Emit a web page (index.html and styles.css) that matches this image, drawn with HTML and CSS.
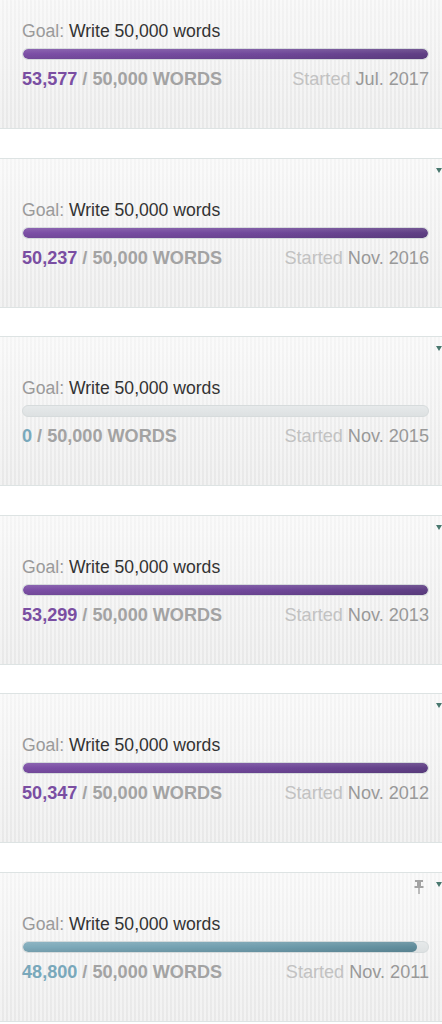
FILE: index.html
```html
<!DOCTYPE html>
<html>
<head>
<meta charset="utf-8">
<link rel="stylesheet" href="styles.css">
</head>
<body>
<div class="list">
  <div class="card">
    <span class="caret"></span>
    <div class="goal"><span class="label">Goal:</span> Write 50,000 words</div>
    <div class="track"><div class="fill purple" style="width:100%"></div></div>
    <div class="meta">
      <div class="count"><span class="num purple-t">53,577</span> / 50,000 WORDS</div>
      <div class="started">Started <span class="date">Jul. 2017</span></div>
    </div>
  </div>
  <div class="card">
    <span class="caret"></span>
    <div class="goal"><span class="label">Goal:</span> Write 50,000 words</div>
    <div class="track"><div class="fill purple" style="width:100%"></div></div>
    <div class="meta">
      <div class="count"><span class="num purple-t">50,237</span> / 50,000 WORDS</div>
      <div class="started">Started <span class="date">Nov. 2016</span></div>
    </div>
  </div>
  <div class="card">
    <span class="caret"></span>
    <div class="goal"><span class="label">Goal:</span> Write 50,000 words</div>
    <div class="track"><div class="fill teal" style="width:0%"></div></div>
    <div class="meta">
      <div class="count"><span class="num teal-t">0</span> / 50,000 WORDS</div>
      <div class="started">Started <span class="date">Nov. 2015</span></div>
    </div>
  </div>
  <div class="card">
    <span class="caret"></span>
    <div class="goal"><span class="label">Goal:</span> Write 50,000 words</div>
    <div class="track"><div class="fill purple" style="width:100%"></div></div>
    <div class="meta">
      <div class="count"><span class="num purple-t">53,299</span> / 50,000 WORDS</div>
      <div class="started">Started <span class="date">Nov. 2013</span></div>
    </div>
  </div>
  <div class="card">
    <span class="caret"></span>
    <div class="goal"><span class="label">Goal:</span> Write 50,000 words</div>
    <div class="track"><div class="fill purple" style="width:100%"></div></div>
    <div class="meta">
      <div class="count"><span class="num purple-t">50,347</span> / 50,000 WORDS</div>
      <div class="started">Started <span class="date">Nov. 2012</span></div>
    </div>
  </div>
  <div class="card">
    <svg class="pin" width="10" height="14" viewBox="0 0 10 14">
      <rect x="1" y="0" width="8" height="2" fill="#a3a3a3"/>
      <rect x="3" y="2" width="4" height="4" fill="#a3a3a3"/>
      <rect x="0.5" y="6" width="9" height="2" fill="#a3a3a3"/>
      <rect x="4.3" y="8" width="1.4" height="6" fill="#a3a3a3"/>
    </svg>
    <span class="caret"></span>
    <div class="goal"><span class="label">Goal:</span> Write 50,000 words</div>
    <div class="track"><div class="fill teal" style="width:97.4%"></div></div>
    <div class="meta">
      <div class="count"><span class="num teal-t">48,800</span> / 50,000 WORDS</div>
      <div class="started">Started <span class="date">Nov. 2011</span></div>
    </div>
  </div>
</div>
</body>
</html>
```
FILE: styles.css
```css
html, body {
  margin: 0;
  padding: 0;
  background: #ffffff;
}
body {
  font-family: "Liberation Sans", Arial, sans-serif;
  overflow: hidden;
}
.list {
  margin-top: -21px;
  display: flex;
  flex-direction: column;
  gap: 28.5px;
}
.card {
  position: relative;
  box-sizing: border-box;
  height: 150px;
  padding: 41px 13px 0 22px;
  border-top: 1px solid #dde3e3;
  border-bottom: 1px solid #dde3e3;
  background:
    repeating-linear-gradient(90deg, rgba(255,255,255,0.35) 0 2px, rgba(0,0,0,0.012) 2px 4px),
    linear-gradient(180deg, #f8f8f8 0%, #f1f1f1 55%, #ebebeb 100%);
}
.caret {
  position: absolute;
  right: 0;
  top: 9px;
  width: 0;
  height: 0;
  border-left: 3.5px solid transparent;
  border-right: 3.5px solid transparent;
  border-top: 5px solid #4a786f;
}
.pin {
  position: absolute;
  right: 18px;
  top: 7px;
}
.goal {
  font-size: 17.6px;
  line-height: 20px;
  color: #333333;
  white-space: nowrap;
}
.label {
  color: #9a9a9a;
}
.track {
  margin-top: 7px;
  height: 12px;
  box-sizing: border-box;
  border-radius: 6px;
  background: linear-gradient(180deg, #e6e9ea 0%, #dde1e2 100%);
  border: 1px solid #d6dbdc;
  overflow: hidden;
}
.fill {
  height: 100%;
  border-radius: 6px;
}
.fill.purple {
  background:
    linear-gradient(180deg, rgba(255,255,255,0.12) 0%, rgba(255,255,255,0) 50%, rgba(0,0,0,0.08) 100%),
    linear-gradient(90deg, #7c4fa6 0%, #70489a 60%, #5f3f84 100%);
}
.fill.teal {
  background:
    linear-gradient(180deg, rgba(255,255,255,0.12) 0%, rgba(255,255,255,0) 50%, rgba(0,0,0,0.08) 100%),
    linear-gradient(90deg, #7fabbb 0%, #6f9dad 60%, #5f8c9b 100%);
}
.meta {
  margin-top: 9px;
  display: flex;
  justify-content: space-between;
  align-items: center;
  line-height: 20px;
  white-space: nowrap;
}
.count {
  font-size: 18.1px;
  font-weight: bold;
  color: #a3a3a3;
}
.purple-t {
  color: #7a4ea2;
}
.teal-t {
  color: #79a8bb;
}
.started {
  font-size: 18.1px;
  color: #c2c2c2;
}
.date {
  color: #999999;
}
```
